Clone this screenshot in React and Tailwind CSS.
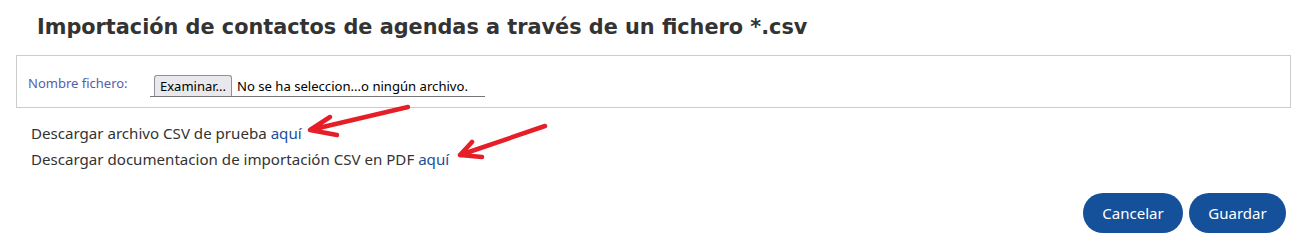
const Arrow = ({ className, d }) => (
  <svg
    className={className}
    viewBox="0 0 120 60"
    fill="none"
    stroke="#e61e27"
    strokeWidth="4.5"
    strokeLinecap="round"
    strokeLinejoin="round"
  >
    <path d={d} />
  </svg>
);

export default function App() {
  return (
    <div className="relative w-[1298px] h-[242px] bg-white font-['Segoe_UI','Noto_Sans',sans-serif]">
      {/* title */}
      <h1 className="pl-[37px] pt-[15px] text-[20.8px] leading-[25px] font-bold text-[#333333] font-['Verdana','DejaVu_Sans',sans-serif]">
        Importación de contactos de agendas a través de un fichero *.csv
      </h1>

      {/* file box */}
      <div className="mt-[15px] ml-[16px] mr-[7px] h-[53px] border border-[#cccccc] flex items-start pl-[11px] pt-[19px]">
        <label className="w-[126px] text-[13px] leading-[16px] text-[#5560a8]">
          Nombre fichero:
        </label>
        <div className="flex items-end border-b border-[#777777] w-[335px] h-[22px] -ml-[4px] pl-[4px]">
          <button className="h-[21px] px-[5px] text-[13px] leading-[19px] text-black bg-[#e9e9ed] border border-[#8f8f9d] border-b-0 rounded-t-[3px]">
            Examinar...
          </button>
          <span className="pl-[5px] pb-[1px] text-[13.1px] leading-[18px] text-black">
            No se ha seleccion...o ningún archivo.
          </span>
        </div>
      </div>

      {/* links */}
      <div className="pl-[31px] pt-[12px] text-[15.1px] leading-[26px] text-[#333333]">
        <p>
          Descargar archivo CSV de prueba{" "}
          <a href="#" className="text-[#1a4f9c]">aquí</a>
        </p>
        <p>
          Descargar documentacion de importación CSV en PDF{" "}
          <a href="#" className="text-[#1a4f9c]">aquí</a>
        </p>
      </div>

      {/* buttons */}
      <div className="absolute right-[12px] top-[193px] flex gap-[6px]">
        <button className="w-[100px] h-[40px] rounded-full bg-[#15509b] text-white text-[15px]">
          Cancelar
        </button>
        <button className="w-[97px] h-[40px] rounded-full bg-[#15509b] text-white text-[15px]">
          Guardar
        </button>
      </div>

      {/* red arrows */}
      <Arrow
        className="absolute left-[300px] top-[100px] w-[120px] h-[60px]"
        d="M108 7 L10 30 M10 30 L30 17 M10 30 L37 35"
      />
      <Arrow
        className="absolute left-[450px] top-[118px] w-[120px] h-[60px]"
        d="M95 8 L10 37 M10 37 L22 24 M10 37 L32 39"
      />
    </div>
  );
}
